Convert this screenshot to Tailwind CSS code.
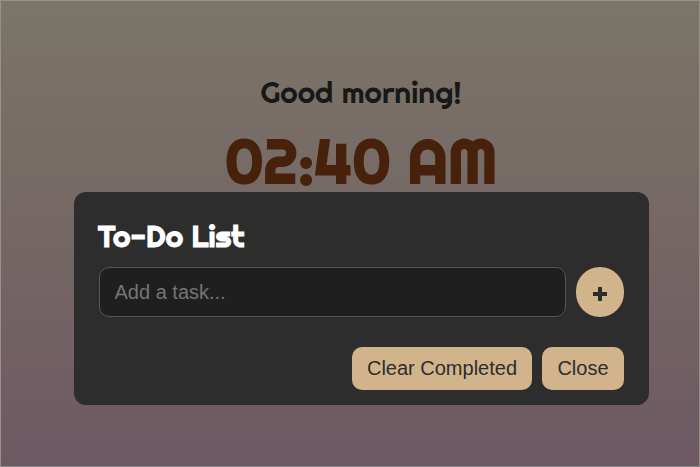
<!DOCTYPE html>
<html lang="en">
<head>
<meta charset="utf-8">
<title>To-Do List</title>
<script src="https://cdn.jsdelivr.net/npm/@tailwindcss/browser@4"></script>
</head>
<body class="h-[467px] w-[700px] overflow-hidden">
<div class="flex h-[467px] w-[700px] flex-col border border-[#999189] border-b-[#92848b] bg-linear-to-b from-[#7b7567] to-[#6e5963] pl-[73px] font-['Righteous','Lato',sans-serif]">
  <header class="flex h-[191px] w-[574px] shrink-0 flex-col items-center whitespace-nowrap">
    <h1 class="mt-[71px] h-10 text-[30px] leading-10 font-normal text-[#181818]">Good morning!</h1>
    <div class="mt-[9px] h-20 text-[60px] leading-20 font-bold text-[#47210b]">02:40 AM</div>
  </header>
  <section class="relative flex h-[213px] w-[575px] shrink-0 flex-col rounded-xl bg-[#2d2d2d] pr-[25px] pl-[25px]">
    <h2 class="-ml-px mt-[24px] h-10 text-[30px] leading-10 font-bold whitespace-nowrap text-white">To-Do List</h2>
    <div class="mt-[11px] flex gap-[10px]">
      <input type="text" placeholder="Add a task..." class="h-[50px] w-[467px] rounded-[10px] border border-[#555] bg-[#1f1f1f] px-[14.5px] font-['Liberation_Sans',sans-serif] text-[20px] text-white placeholder:text-[#757575]">
      <button aria-label="Add task" class="flex h-[50px] w-12 items-center justify-center rounded-full bg-[#d2b48c] text-[#2d2d2d]">
        <svg class="mt-[4px] size-[14px]" viewBox="0 0 14 14"><path d="M7 0v14M0 7h14" stroke="currentColor" stroke-width="4"/></svg>
      </button>
    </div>
    <div class="mt-[30px] flex justify-end gap-[10px] font-['Liberation_Sans',sans-serif] text-[20px] text-[#2d2d2d]">
      <button class="h-[43px] w-[180px] rounded-[10px] bg-[#d2b48c] pb-[2px] whitespace-nowrap">Clear Completed</button>
      <button class="h-[43px] w-[82px] rounded-[10px] bg-[#d2b48c] pb-[2px]">Close</button>
    </div>
  </section>
</div>
</body>
</html>
